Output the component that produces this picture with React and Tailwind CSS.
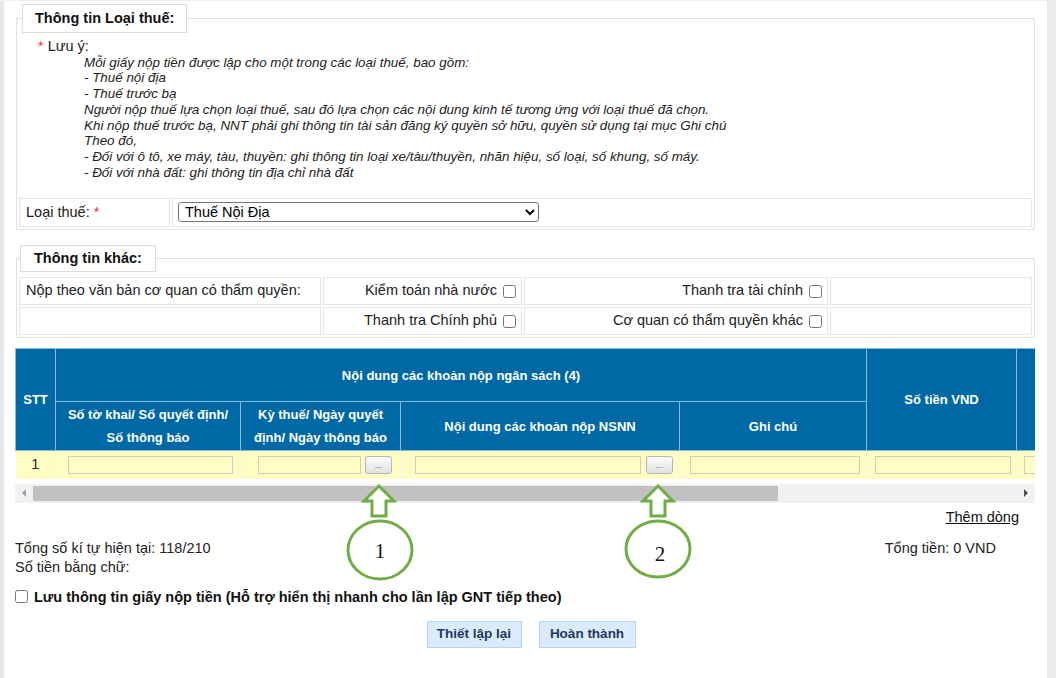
import React from "react";

const notes = [
  "Mỗi giấy nộp tiền được lập cho một trong các loại thuế, bao gồm:",
  "- Thuế nội địa",
  "- Thuế trước bạ",
  "Người nộp thuế lựa chọn loại thuế, sau đó lựa chọn các nội dung kinh tế tương ứng với loại thuế đã chọn.",
  "Khi nộp thuế trước bạ, NNT phải ghi thông tin tài sản đăng ký quyền sở hữu, quyền sử dụng tại mục Ghi chú",
  "Theo đó,",
  "- Đối với ô tô, xe máy, tàu, thuyền: ghi thông tin loại xe/tàu/thuyền, nhãn hiệu, số loại, số khung, số máy.",
  "- Đối với nhà đất: ghi thông tin địa chỉ nhà đất",
];

const YellowInput = ({ className }) => (
  <input
    type="text"
    className={"h-[18px] border border-[#cdcdc4] bg-[#fffcc4] outline-none " + className}
  />
);

const DotsButton = () => (
  <button className="w-[27px] h-[18px] border border-[#b5b5b5] rounded-[3px] bg-linear-to-b from-[#fbfbfb] to-[#e2e2e2] text-[9px] leading-[14px] text-[#666]">
    ...
  </button>
);

const Check = ({ label }) => (
  <div className="flex items-center justify-end gap-[6px] pr-[5px]">
    <span>{label}</span>
    <input type="checkbox" className="w-[13px] h-[13px] m-0" />
  </div>
);

export default function App() {
  return (
    <div
      className="relative w-[1056px] h-[678px] bg-white flex overflow-hidden border-t border-[#efefef] text-[14.5px] text-[#222]"
      style={{ fontFamily: '"Liberation Sans", Arial, sans-serif' }}
    >
      <div className="w-[4px] bg-[#e9e9e9]" />

      <div className="flex-1 pl-[11px] pr-[12px]">
        {/* Thông tin Loại thuế */}
        <fieldset className="mt-[3px] ml-[1px] border border-[#e2e2e2]">
          <legend className="ml-[5px] border border-[#dcdcdc] bg-white px-[12px] leading-[27px] font-bold text-[14.5px] text-[#111]">
            Thông tin Loại thuế:
          </legend>
          <div className="pt-[6px] pl-[21px] leading-[15.7px]">
            <div>
              <span className="text-[#e2373f]">*</span> Lưu ý:
            </div>
            <div className="ml-[46px] italic text-[13.4px]">
              {notes.map((n, i) => (
                <div key={i}>{n}</div>
              ))}
            </div>
          </div>
          <table className="mt-[16px] w-full border-separate border-spacing-[2px]">
            <tbody>
              <tr>
                <td className="w-[151px] h-[29px] border border-[#e6e6e6] pl-[6px]">
                  Loại thuế: <span className="text-[#e2373f]">*</span>
                </td>
                <td className="border border-[#e6e6e6] pl-[5px]">
                  <select className="w-[361px] h-[20px] border border-[#767676] rounded-[3px] bg-white text-[14.5px] text-black pl-[2px]">
                    <option>Thuế Nội Địa</option>
                  </select>
                </td>
              </tr>
            </tbody>
          </table>
        </fieldset>

        {/* Thông tin khác */}
        <fieldset className="mt-[15px] ml-[1px] border border-[#e2e2e2]">
          <legend className="ml-[3px] border border-[#dcdcdc] bg-white px-[13px] leading-[25px] font-bold text-[14.5px] text-[#111]">
            Thông tin khác:
          </legend>
          <table className="mt-[3px] w-full table-fixed border-separate border-spacing-[2px]">
            <colgroup>
              <col className="w-[302px]" />
              <col className="w-[199px]" />
              <col className="w-[304px]" />
              <col />
            </colgroup>
            <tbody>
              <tr>
                <td className="h-[28px] border border-[#e6e6e6] pl-[6px] whitespace-nowrap">
                  Nộp theo văn bản cơ quan có thẩm quyền:
                </td>
                <td className="border border-[#e6e6e6]">
                  <Check label="Kiểm toán nhà nước" />
                </td>
                <td className="border border-[#e6e6e6]">
                  <Check label="Thanh tra tài chính" />
                </td>
                <td className="border border-[#e6e6e6]"></td>
              </tr>
              <tr>
                <td className="h-[28px] border border-[#e6e6e6]"></td>
                <td className="border border-[#e6e6e6]">
                  <Check label="Thanh tra Chính phủ" />
                </td>
                <td className="border border-[#e6e6e6]">
                  <Check label="Cơ quan có thẩm quyền khác" />
                </td>
                <td className="border border-[#e6e6e6]"></td>
              </tr>
            </tbody>
          </table>
        </fieldset>

        {/* Bảng khoản nộp */}
        <div className="mt-[10px] w-[1020px] overflow-hidden">
          <table className="w-[1250px] table-fixed border-collapse">
            <colgroup>
              <col className="w-[40px]" />
              <col className="w-[185px]" />
              <col className="w-[160px]" />
              <col className="w-[279px]" />
              <col className="w-[187px]" />
              <col className="w-[150px]" />
              <col className="w-[249px]" />
            </colgroup>
            <thead className="bg-[#0069a5] text-white font-bold text-[13px]">
              <tr className="h-[53px]">
                <th rowSpan={2} className="border border-[#86bbe2]">STT</th>
                <th colSpan={4} className="border border-[#86bbe2]">
                  Nội dung các khoản nộp ngân sách (4)
                </th>
                <th rowSpan={2} className="border border-[#86bbe2]">Số tiền VND</th>
                <th rowSpan={2} className="border border-[#86bbe2]"></th>
              </tr>
              <tr className="h-[49px] leading-[23px]">
                <th className="border border-[#86bbe2] px-[4px]">
                  Số tờ khai/ Số quyết định/
                  <br />
                  Số thông báo
                </th>
                <th className="border border-[#86bbe2] px-[4px]">
                  Kỳ thuế/ Ngày quyết
                  <br />
                  định/ Ngày thông báo
                </th>
                <th className="border border-[#86bbe2]">Nội dung các khoản nộp NSNN</th>
                <th className="border border-[#86bbe2]">Ghi chú</th>
              </tr>
            </thead>
            <tbody>
              <tr className="h-[28px] bg-[#fffcc4]">
                <td className="text-center border-r border-[#f6f6e4]">1</td>
                <td className="pl-[12px] border-r border-[#f6f6e4]">
                  <YellowInput className="w-[165px] block" />
                </td>
                <td className="pl-[17px] border-r border-[#f6f6e4]">
                  <div className="flex items-center gap-[4px]">
                    <YellowInput className="w-[103px]" />
                    <DotsButton />
                  </div>
                </td>
                <td className="pl-[14px] border-r border-[#f6f6e4]">
                  <div className="flex items-center gap-[5px]">
                    <YellowInput className="w-[226px]" />
                    <DotsButton />
                  </div>
                </td>
                <td className="pl-[10px] border-r border-[#f6f6e4]">
                  <YellowInput className="w-[170px] block" />
                </td>
                <td className="pl-[8px] border-r border-[#f6f6e4]">
                  <YellowInput className="w-[136px] block" />
                </td>
                <td className="pl-[7px]">
                  <YellowInput className="w-[200px] block" />
                </td>
              </tr>
            </tbody>
          </table>
        </div>

        {/* thanh cuộn ngang */}
        <div className="mt-[5px] w-[1020px] h-[19px] bg-[#f1f1f1] flex items-center">
          <div className="w-[18px] flex justify-center">
            <div className="w-0 h-0 border-y-[4px] border-y-transparent border-r-[4px] border-r-[#a3a3a3]" />
          </div>
          <div className="w-[745px] h-[15px] bg-[#c1c1c1]" />
          <div className="flex-1" />
          <div className="w-[18px] flex justify-center">
            <div className="w-0 h-0 border-y-[4px] border-y-transparent border-l-[4px] border-l-[#505050]" />
          </div>
        </div>

        <div className="mt-[5px] flex justify-end pr-[16px] leading-[18px]">
          <span className="underline text-[#111]">Thêm dòng</span>
        </div>

        <div className="mt-[13px] flex justify-between leading-[19px]">
          <div>
            <div>Tổng số kí tự hiện tại: 118/210</div>
            <div>Số tiền bằng chữ:</div>
          </div>
          <div className="pr-[39px]">Tổng tiền: 0 VND</div>
        </div>

        <label className="mt-[11px] flex items-center gap-[6px] font-bold leading-[18px] text-[#111]">
          <input type="checkbox" className="w-[13px] h-[13px] m-0" />
          Lưu thông tin giấy nộp tiền (Hỗ trợ hiển thị nhanh cho lần lập GNT tiếp theo)
        </label>

        <div className="mt-[15px] flex justify-center gap-[17px] pl-[12px]">
          <button className="w-[95px] h-[27px] border border-[#b8d5f2] bg-[#dcebfb] font-bold text-[13.5px] text-[#1d3a5c]">
            Thiết lập lại
          </button>
          <button className="w-[97px] h-[27px] border border-[#b8d5f2] bg-[#dcebfb] font-bold text-[13.5px] text-[#1d3a5c]">
            Hoàn thành
          </button>
        </div>
      </div>

      <div className="w-[9px] bg-[#ececec]" />

      {/* chú thích mũi tên */}
      <svg className="absolute left-0 top-0 pointer-events-none" width="1056" height="678">
        <g stroke="#70ad47" strokeWidth="3" strokeLinejoin="miter">
          <polygon points="379,485 394,500 386,500 386,515 372,515 372,500 364,500" fill="#fff" />
          <polygon points="658,485 673,500 665,500 665,515 651,515 651,500 643,500" fill="#fff" />
          <ellipse cx="380" cy="549" rx="32" ry="29" fill="none" />
          <ellipse cx="658" cy="548" rx="32" ry="28" fill="none" />
        </g>
        <text x="380" y="557" textAnchor="middle" fontFamily="Liberation Serif, serif" fontSize="21" fill="#111">1</text>
        <text x="660" y="560" textAnchor="middle" fontFamily="Liberation Serif, serif" fontSize="21" fill="#111">2</text>
      </svg>
    </div>
  );
}
